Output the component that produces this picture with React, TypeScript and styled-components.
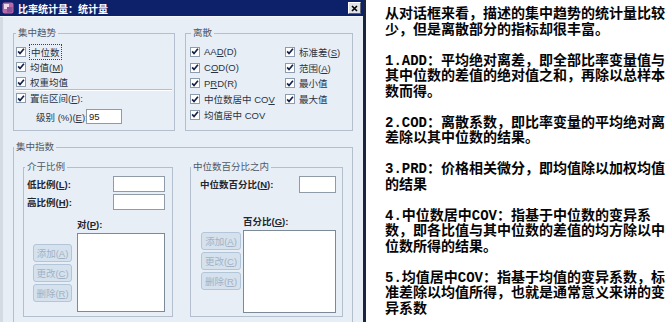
import React from 'react';
import styled, { createGlobalStyle } from 'styled-components';

const GlobalStyle = createGlobalStyle`
  html, body {
    margin: 0;
    padding: 0;
    background: #ffffff;
  }
  body {
    width: 669px;
    height: 322px;
    overflow: hidden;
  }
`;

const uiFont = `"Liberation Sans", "Noto Sans CJK SC", sans-serif`;

const Page = styled.div`
  display: flex;
  width: 669px;
  height: 322px;
  overflow: hidden;
  background: #ffffff;
`;

const Dialog = styled.div`
  flex: none;
  width: 366px;
  height: 340px;
  display: flex;
  flex-direction: column;
  box-sizing: border-box;
  background: #e8eef5;
  border-right: 3px solid #1c2540;
  font-family: ${uiFont};
  font-size: 9.5px;
  color: #2a3442;
`;

const TitleBar = styled.div`
  flex: none;
  height: 16px;
  display: flex;
  align-items: center;
  gap: 4px;
  padding: 0 2px;
  background: #0d216a;
  border-bottom: 1px solid #f4f7fb;
`;

const TitleText = styled.span`
  color: #ffffff;
  font-weight: 700;
  font-size: 10px;
  white-space: nowrap;
`;

const CloseButton = styled.div`
  margin-left: auto;
  width: 11px;
  height: 10px;
  display: flex;
  align-items: center;
  justify-content: center;
  background: #dfe3e8;
  border: 1px solid;
  border-color: #ffffff #5d6670 #5d6670 #ffffff;
`;

const Body = styled.div`
  flex: 1;
  display: flex;
  flex-direction: column;
  gap: 10px;
  padding: 10px 10px 0 10px;
  border-left: 3px solid #d5dbe2;
`;

const TopRow = styled.div`
  display: flex;
  gap: 10px;
`;

const GroupBox = styled.fieldset<{ $w: number; $h: number }>`
  margin: 0;
  padding: 0;
  min-width: 0;
  width: ${({ $w }) => $w}px;
  height: ${({ $h }) => $h}px;
  box-sizing: border-box;
  border: 1px solid #b3bfcc;
  flex: none;
`;

const Legend = styled.legend<{ $x?: number }>`
  margin-left: ${({ $x }) => ($x ?? 2)}px;
  padding: 0 2px;
  font-size: 9.5px;
  line-height: 12px;
  color: #4d5868;
`;

const TrendList = styled.div`
  display: flex;
  flex-direction: column;
  padding: 5px 2px 0 2px;
`;

const DispersionGrid = styled.div`
  display: grid;
  grid-template-columns: 95px 1fr;
  grid-auto-rows: 15.75px;
  padding: 5px 0 0 4px;
`;

const CheckRow = styled.div<{ $h?: number }>`
  display: flex;
  align-items: center;
  gap: 4px;
  height: ${({ $h }) => $h ?? 15.25}px;
  white-space: nowrap;
`;

const Box = styled.span`
  flex: none;
  width: 10px;
  height: 10px;
  box-sizing: border-box;
  display: flex;
  align-items: center;
  justify-content: center;
  background: #ffffff;
  border: 1px solid #8d9cad;
`;

const FocusText = styled.span`
  outline: 1px dotted #3a4350;
  outline-offset: 0;
  padding: 0 1px;
`;

const Separator = styled.div`
  height: 0;
  border-top: 1px solid #b3bfcc;
  border-bottom: 1px solid #ffffff;
  margin: -1px 0 0;
`;

const LevelRow = styled.div`
  display: flex;
  align-items: center;
  gap: 2px;
  height: 15px;
  margin-top: 3px;
  padding-left: 20px;
  white-space: nowrap;
`;

const TextInput = styled.div<{ $w: number; $h?: number }>`
  flex: none;
  width: ${({ $w }) => $w}px;
  height: ${({ $h }) => $h ?? 16}px;
  box-sizing: border-box;
  display: flex;
  align-items: center;
  padding-left: 2px;
  background: #ffffff;
  border: 1px solid #8f9ba6;
  font-size: 9.5px;
  color: #222;
`;

const Inners = styled.div`
  display: flex;
  gap: 17px;
  padding: 8px 9px 0 9px;
`;

const InnerBody = styled.div<{ $pad: string }>`
  display: flex;
  flex-direction: column;
  padding: ${({ $pad }) => $pad};
`;

const FieldRow = styled.div`
  display: flex;
  align-items: center;
  justify-content: space-between;
  height: 18px;
  white-space: nowrap;
`;

const BoldLabel = styled.span`
  font-weight: 700;
  color: #1f2630;
  white-space: nowrap;
`;

const ListArea = styled.div<{ $top: number; $left: number; $gap: number }>`
  display: flex;
  gap: ${({ $gap }) => $gap}px;
  margin-top: ${({ $top }) => $top}px;
  padding-left: ${({ $left }) => $left}px;
`;

const ButtonColumn = styled.div<{ $top: number }>`
  display: flex;
  flex-direction: column;
  gap: 2px;
  padding-top: ${({ $top }) => $top}px;
`;

const DisabledButton = styled.div<{ $w: number }>`
  width: ${({ $w }) => $w}px;
  height: 18px;
  box-sizing: border-box;
  display: flex;
  align-items: center;
  justify-content: center;
  background: #d5e1ed;
  border: 1px solid #b3c5d8;
  border-radius: 3px;
  color: #a2b2c4;
  white-space: nowrap;
`;

const ListColumn = styled.div`
  display: flex;
  flex-direction: column;
  gap: 2px;
`;

const ListLabel = styled(BoldLabel)`
  line-height: 12px;
`;

const ListBox = styled.div<{ $w: number; $h: number }>`
  width: ${({ $w }) => $w}px;
  height: ${({ $h }) => $h}px;
  box-sizing: border-box;
  background: #ffffff;
  border: 1px solid #7c8996;
`;

const TextPanel = styled.div`
  flex: 1;
  padding: 7px 0 0 19px;
  font-family: "Liberation Mono", "Noto Sans CJK SC", monospace;
  font-size: 14px;
  font-weight: 700;
  line-height: 15.5px;
  color: #050505;
`;

const Paragraph = styled.p`
  margin: 0 0 15.5px;
`;

const Line = styled.span`
  display: block;
  white-space: nowrap;
`;

const Check = () => (
  <Box>
    <svg width="9" height="9" viewBox="0 0 9 9">
      <path d="M1.3 4.4 L3.4 6.8 L7.8 1.4" fill="none" stroke="#14224a" strokeWidth="1.9" />
    </svg>
  </Box>
);

const CheckItem: React.FC<{ children: React.ReactNode; h?: number }> = ({ children, h }) => (
  <CheckRow $h={h}>
    <Check />
    <span>{children}</span>
  </CheckRow>
);

const AppIcon = () => (
  <svg width="12" height="12" viewBox="0 0 12 12">
    <rect x="0.5" y="0.5" width="11" height="11" rx="2" fill="#b86aa8" />
    <rect x="2" y="2" width="5" height="5" fill="#f1d7ea" />
    <rect x="5" y="5" width="5.5" height="5.5" fill="#8c4f9c" />
  </svg>
);

const paragraphs = [
  ['从对话框来看，描述的集中趋势的统计量比较', '少，但是离散部分的指标却很丰富。'],
  ['1.ADD：平均绝对离差，即全部比率变量值与', '其中位数的差值的绝对值之和，再除以总样本', '数而得。'],
  ['2.COD：离散系数，即比率变量的平均绝对离', '差除以其中位数的结果。'],
  ['3.PRD：价格相关微分，即均值除以加权均值', '的结果'],
  ['4.中位数居中COV：指基于中位数的变异系', '数，即各比值与其中位数的差值的均方除以中', '位数所得的结果。'],
  ['5.均值居中COV：指基于均值的变异系数，标', '准差除以均值所得，也就是通常意义来讲的变', '异系数'],
];

const buttons: [string, string][] = [
  ['添加', 'A'],
  ['更改', 'C'],
  ['删除', 'R'],
];

export default function App() {
  return (
    <>
      <GlobalStyle />
      <Page>
        <Dialog>
          <TitleBar>
            <AppIcon />
            <TitleText>比率统计量：统计量</TitleText>
            <CloseButton>
              <svg width="7" height="7" viewBox="0 0 7 7">
                <path d="M1 1 L6 6 M6 1 L1 6" stroke="#000" strokeWidth="1.6" />
              </svg>
            </CloseButton>
          </TitleBar>
          <Body>
            <TopRow>
              <GroupBox $w={162} $h={104}>
                <Legend>集中趋势</Legend>
                <TrendList>
                  <CheckRow>
                    <Check />
                    <FocusText>中位数</FocusText>
                  </CheckRow>
                  <CheckItem>均值(<u>M</u>)</CheckItem>
                  <CheckItem>权重均值</CheckItem>
                  <Separator />
                  <CheckItem>置信区间(<u>F</u>):</CheckItem>
                  <LevelRow>
                    <span style={{ width: 48 }}>级别 (%)(<u>E</u>):</span>
                    <TextInput $w={36} $h={15}>95</TextInput>
                  </LevelRow>
                </TrendList>
              </GroupBox>
              <GroupBox $w={168} $h={104}>
                <Legend $x={5}>离散</Legend>
                <DispersionGrid>
                  <CheckItem h={15.75}>AA<u>D</u>(D)</CheckItem>
                  <CheckItem h={15.75}>标准差(<u>S</u>)</CheckItem>
                  <CheckItem h={15.75}>C<u>O</u>D(O)</CheckItem>
                  <CheckItem h={15.75}>范围(<u>A</u>)</CheckItem>
                  <CheckItem h={15.75}>P<u>R</u>D(R)</CheckItem>
                  <CheckItem h={15.75}>最小值</CheckItem>
                  <CheckItem h={15.75}>中位数居中 CO<u>V</u></CheckItem>
                  <CheckItem h={15.75}>最大值</CheckItem>
                  <CheckItem h={15.75}>均值居中 COV</CheckItem>
                </DispersionGrid>
              </GroupBox>
            </TopRow>
            <GroupBox $w={340} $h={190}>
              <Legend $x={0}>集中指数</Legend>
              <Inners>
                <GroupBox $w={150} $h={156}>
                  <Legend $x={1}>介于比例</Legend>
                  <InnerBody $pad="2px 7px 0 3px">
                    <FieldRow>
                      <BoldLabel>低比例(<u>L</u>):</BoldLabel>
                      <TextInput $w={52} />
                    </FieldRow>
                    <FieldRow>
                      <BoldLabel>高比例(<u>H</u>):</BoldLabel>
                      <TextInput $w={52} />
                    </FieldRow>
                    <ListArea $top={8} $left={6} $gap={5}>
                      <ButtonColumn $top={25}>
                        {buttons.map(([t, k]) => (
                          <DisabledButton key={k} $w={39}>
                            {t}(<u>{k}</u>)
                          </DisabledButton>
                        ))}
                      </ButtonColumn>
                      <ListColumn>
                        <ListLabel>对(<u>P</u>):</ListLabel>
                        <ListBox $w={88} $h={79} />
                      </ListColumn>
                    </ListArea>
                  </InnerBody>
                </GroupBox>
                <GroupBox $w={153} $h={156}>
                  <Legend $x={0}>中位数百分比之内</Legend>
                  <InnerBody $pad="2px 6px 0 9px">
                    <FieldRow>
                      <BoldLabel>中位数百分比(<u>N</u>):</BoldLabel>
                      <TextInput $w={37} $h={17} />
                    </FieldRow>
                    <ListArea $top={23} $left={1} $gap={2}>
                      <ButtonColumn $top={16}>
                        {buttons.map(([t, k]) => (
                          <DisabledButton key={k} $w={40}>
                            {t}(<u>{k}</u>)
                          </DisabledButton>
                        ))}
                      </ButtonColumn>
                      <ListColumn>
                        <ListLabel>百分比(<u>G</u>):</ListLabel>
                        <ListBox $w={93} $h={83} />
                      </ListColumn>
                    </ListArea>
                  </InnerBody>
                </GroupBox>
              </Inners>
            </GroupBox>
          </Body>
        </Dialog>
        <TextPanel>
          {paragraphs.map((lines, i) => (
            <Paragraph key={i}>
              {lines.map((l, j) => (
                <Line key={j}>{l}</Line>
              ))}
            </Paragraph>
          ))}
        </TextPanel>
      </Page>
    </>
  );
}
